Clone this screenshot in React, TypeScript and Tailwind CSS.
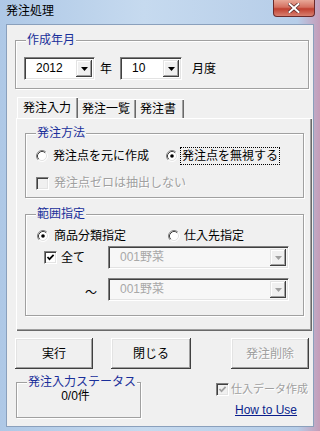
import React from "react";

// Classic Win32-style dialog: 発注処理

const font = { fontFamily: '"Liberation Sans", "Noto Sans CJK JP", sans-serif' };

function Radio({ checked }: { checked?: boolean }) {
  return (
    <svg width="12" height="12" viewBox="0 0 12 12" className="shrink-0">
      <circle cx="6" cy="6" r="5" fill="#fff" />
      <path d="M2.11 9.89 A5.5 5.5 0 0 1 9.89 2.11" stroke="#808080" fill="none" />
      <path d="M9.89 2.11 A5.5 5.5 0 0 1 2.11 9.89" stroke="#fff" fill="none" />
      <path d="M2.82 9.18 A4.5 4.5 0 0 1 9.18 2.82" stroke="#404040" fill="none" />
      <path d="M9.18 2.82 A4.5 4.5 0 0 1 2.82 9.18" stroke="#e3e3e3" fill="none" />
      {checked && <circle cx="6" cy="6" r="1.8" fill="#000" />}
    </svg>
  );
}

function Check({ checked, disabled }: { checked?: boolean; disabled?: boolean }) {
  return (
    <div
      className={`w-[13px] h-[13px] shrink-0 border border-t-[#808080] border-l-[#808080] border-b-white border-r-white shadow-[inset_1px_1px_0_#404040,inset_-1px_-1px_0_#e3e3e3] flex items-center justify-center ${
        disabled ? "bg-[#f0f0f0]" : "bg-white"
      }`}
    >
      {checked && (
        <svg width="9" height="9" viewBox="0 0 9 9">
          <path d="M1.5 4 L3.5 6.2 L7.6 1.8" stroke={disabled ? "#a0a0a0" : "#000"} strokeWidth="1.7" fill="none" />
        </svg>
      )}
    </div>
  );
}

function Combo({ value, width, disabled }: { value: string; width: string; disabled?: boolean }) {
  return (
    <div
      className={`${width} h-[23px] flex border border-t-[#808080] border-l-[#808080] border-b-white border-r-white shadow-[inset_1px_1px_0_#404040,inset_-1px_-1px_0_#e3e3e3] p-[2px] ${
        disabled ? "bg-[#f7f7f7]" : "bg-white"
      }`}
    >
      <span
        className={`flex-1 pl-[9px] text-[12px] leading-[16px] ${disabled ? "text-[#a8a8a8]" : "text-black"}`}
      >
        {value}
      </span>
      <div className="w-[16px] h-full bg-[#f0f0f0] shadow-[inset_-1px_-1px_0_#404040,inset_1px_1px_0_#e3e3e3,inset_-2px_-2px_0_#a0a0a0,inset_2px_2px_0_#fff] flex items-center justify-center">
        <svg width="7" height="4" viewBox="0 0 7 4">
          <path d="M0 0 H7 L3.5 4 Z" fill={disabled ? "#a0a0a0" : "#000"} />
        </svg>
      </div>
    </div>
  );
}

function Group({
  label,
  className,
  children,
}: {
  label: string;
  className: string;
  children?: React.ReactNode;
}) {
  return (
    <div
      className={`relative border border-[#a0a0a0] shadow-[1px_1px_0_#fff,inset_1px_1px_0_#fff] ${className}`}
    >
      <span className="absolute left-[10px] top-[-8px] bg-[#f0f0f0] px-[1px] text-[12px] leading-[14px] text-[#1a2f9a] whitespace-nowrap">
        {label}
      </span>
      {children}
    </div>
  );
}

function Button({ label, width, disabled }: { label: string; width: string; disabled?: boolean }) {
  return (
    <div
      className={`${width} h-[31px] bg-[#f0f0f0] shadow-[inset_-1px_-1px_0_#404040,inset_1px_1px_0_#fff,inset_-2px_-2px_0_#a0a0a0,inset_2px_2px_0_#e3e3e3] flex items-center justify-center text-[12px] ${
        disabled ? "text-[#a0a0a0] [text-shadow:1px_1px_0_#fff]" : "text-black"
      }`}
    >
      {label}
    </div>
  );
}

export default function App() {
  return (
    <div
      className="w-[320px] h-[431px] overflow-hidden bg-[linear-gradient(90deg,#aec8e6_0%,#c6daef_45%,#b6cde8_93%,#c59cb8_100%)] select-none"
      style={font}
    >
      {/* title bar */}
      <div className="relative h-[24px] flex items-start">
        <span className="ml-[6px] mt-[4px] text-[12px] leading-[14px] text-black">発注処理</span>
        <div className="absolute right-[5px] top-0 w-[42px] h-[17px] rounded-b-[4px] border border-t-0 border-[#6b2a2a] bg-[linear-gradient(180deg,#e8a898_0%,#d47060_45%,#c04030_55%,#d88070_100%)] flex items-center justify-center">
          <svg width="12" height="10" viewBox="0 0 12 10">
            <path d="M1.5 1 L10.5 9 M10.5 1 L1.5 9" stroke="#5a2a2a" strokeWidth="3.4" strokeLinecap="square" />
            <path d="M1.5 1 L10.5 9 M10.5 1 L1.5 9" stroke="#fff" strokeWidth="2" strokeLinecap="square" />
          </svg>
        </div>
      </div>

      {/* client */}
      <div className="ml-[6px] w-[308px] h-[403px] bg-[#f0f0f0] border border-[#8aa0bc] text-[12px] leading-[14px] text-black whitespace-nowrap">
        {/* 作成年月 */}
        <Group label="作成年月" className="ml-[8px] mt-[15px] w-[294px] h-[49px]">
          <div className="flex items-center pl-[8px] pt-[16px]">
            <Combo value="2012" width="w-[71px]" />
            <span className="ml-[5px]">年</span>
            <div className="ml-[8px]">
              <Combo value="10" width="w-[62px]" />
            </div>
            <span className="ml-[10px]">月度</span>
          </div>
        </Group>

        {/* tabs */}
        <div className="ml-[10px] mt-[8px] flex items-end h-[21px]">
          <div className="w-[61px] h-[21px] pl-[5px] pt-[3px] border-t border-l border-white shadow-[inset_-1px_0_0_#696969,inset_-2px_0_0_#a0a0a0] bg-[#f0f0f0] relative z-10">
            発注入力
          </div>
          <div className="w-[58px] h-[19px] pl-[4px] pt-[2px] border-t border-white shadow-[inset_-1px_0_0_#696969,inset_-2px_0_0_#a0a0a0]">
            発注一覧
          </div>
          <div className="w-[48px] h-[19px] pl-[4px] pt-[2px] border-t border-white shadow-[inset_-1px_0_0_#696969,inset_-2px_0_0_#a0a0a0]">
            発注書
          </div>
        </div>
        <div className="ml-[9px] w-[296px] h-[213px] border-t border-l border-white shadow-[inset_-1px_-1px_0_#696969,inset_-2px_-2px_0_#a0a0a0] pt-[14px]">
          <Group label="発注方法" className="ml-[8px] w-[279px] h-[65px]">
            <div className="flex items-center pt-[14px] pl-[10px] h-[30px]">
              <Radio />
              <span className="ml-[5px]">発注点を元に作成</span>
              <div className="ml-[17px]">
                <Radio checked />
              </div>
              <span className="ml-[2px] px-[1px] py-[1px] border border-dotted border-black">発注点を無視する</span>
            </div>
            <div className="flex items-center pt-[12px] pl-[10px]">
              <Check disabled />
              <span className="ml-[5px] text-[#a0a0a0] [text-shadow:1px_1px_0_#fff]">発注点ゼロは抽出しない</span>
            </div>
          </Group>

          <Group label="範囲指定" className="ml-[8px] mt-[16px] w-[279px] h-[102px]">
            <div className="flex items-center pt-[14px] pl-[11px]">
              <Radio checked />
              <span className="ml-[5px]">商品分類指定</span>
              <div className="ml-[42px]">
                <Radio />
              </div>
              <span className="ml-[4px]">仕入先指定</span>
            </div>
            <div className="flex items-center mt-[3px]">
              <div className="w-[82px] flex items-center pl-[18px]">
                <Check checked />
                <span className="ml-[4px]">全て</span>
              </div>
              <Combo value="001野菜" width="w-[181px]" disabled />
            </div>
            <div className="flex items-center mt-[9px]">
              <div className="w-[82px] flex justify-end pr-[11px] pt-[6px]">～</div>
              <Combo value="001野菜" width="w-[181px]" disabled />
            </div>
          </Group>
        </div>

        {/* buttons */}
        <div className="flex ml-[8px] mt-[7px]">
          <Button label="実行" width="w-[78px]" />
          <div className="ml-[18px]">
            <Button label="閉じる" width="w-[80px]" />
          </div>
          <div className="ml-[40px]">
            <Button label="発注削除" width="w-[78px]" disabled />
          </div>
        </div>

        {/* status + options */}
        <div className="flex ml-[9px] mt-[13px]">
          <Group label="発注入力ステータス" className="w-[125px] h-[36px] shrink-0">
            <div className="text-center pt-[6px] pr-[6px]">0/0件</div>
          </Group>
          <div className="ml-[75px] flex flex-col">
            <div className="flex items-center">
              <Check checked disabled />
              <span className="ml-[2px] text-[11px] text-[#a0a0a0] [text-shadow:1px_1px_0_#fff]">仕入データ作成</span>
            </div>
            <span className="ml-[19px] mt-[7px] text-[#0a1e8c] underline underline-offset-1 text-[12px]">
              How to Use
            </span>
          </div>
        </div>
      </div>
    </div>
  );
}
